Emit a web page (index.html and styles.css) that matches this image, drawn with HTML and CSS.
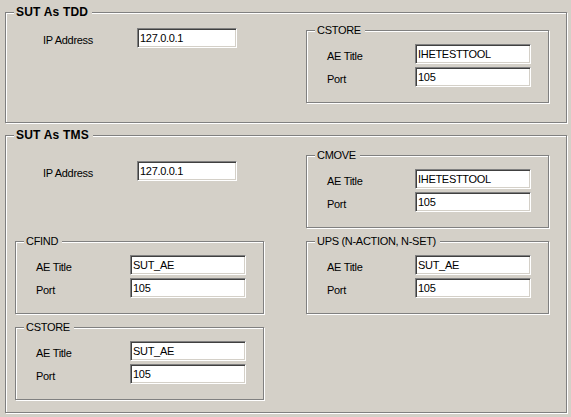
FILE: index.html
```html
<!DOCTYPE html>
<html>
<head>
<meta charset="utf-8">
<title>SUT Settings</title>
<link rel="stylesheet" href="styles.css">
</head>
<body>
<div class="dialog">
  <section class="group main tdd">
    <div class="legend legend-bold">SUT As TDD</div>
    <div class="cols">
      <div class="col col-left">
        <div class="ip-row ip-tdd"><label class="ip-label">IP Address</label><input class="box ip-box" type="text" value="127.0.0.1" readonly></div>
      </div>
      <div class="col col-right">
        <section class="group sub sub-tdd">
          <div class="legend">CSTORE</div>
          <div class="field"><label>AE Title</label><input class="box" type="text" value="IHETESTTOOL" readonly></div>
          <div class="field"><label>Port</label><input class="box" type="text" value="105" readonly></div>
        </section>
      </div>
    </div>
  </section>

  <section class="group main tms">
    <div class="legend legend-bold">SUT As TMS</div>
    <div class="cols">
      <div class="col col-left">
        <div class="ip-row ip-tms"><label class="ip-label">IP Address</label><input class="box ip-box" type="text" value="127.0.0.1" readonly></div>
        <section class="group sub sub-cfind">
          <div class="legend">CFIND</div>
          <div class="field"><label>AE Title</label><input class="box" type="text" value="SUT_AE" readonly></div>
          <div class="field"><label>Port</label><input class="box" type="text" value="105" readonly></div>
        </section>
        <section class="group sub sub-next">
          <div class="legend">CSTORE</div>
          <div class="field"><label>AE Title</label><input class="box" type="text" value="SUT_AE" readonly></div>
          <div class="field"><label>Port</label><input class="box" type="text" value="105" readonly></div>
        </section>
      </div>
      <div class="col col-right">
        <section class="group sub sub-first">
          <div class="legend">CMOVE</div>
          <div class="field"><label>AE Title</label><input class="box" type="text" value="IHETESTTOOL" readonly></div>
          <div class="field"><label>Port</label><input class="box" type="text" value="105" readonly></div>
        </section>
        <section class="group sub sub-next">
          <div class="legend">UPS (N-ACTION, N-SET)</div>
          <div class="field"><label>AE Title</label><input class="box" type="text" value="SUT_AE" readonly></div>
          <div class="field"><label>Port</label><input class="box" type="text" value="105" readonly></div>
        </section>
      </div>
    </div>
  </section>
</div>
</body>
</html>
```
FILE: styles.css
```css
* { box-sizing: border-box; }

html, body {
  margin: 0;
  background: #d4d0c8;
}

body {
  width: 571px;
  height: 417px;
  overflow: hidden;
  font-family: "Liberation Sans", Arial, sans-serif;
  font-size: 11px;
  letter-spacing: -0.3px;
  color: #000;
}

.dialog {
  padding: 12px 0 0 5px;
}

/* etched group box */
.group {
  border: 1px solid #808080;
  box-shadow: inset 1px 1px 0 #fff, 1px 1px 0 #fff;
}

.main { width: 562px; }
.tdd { padding-bottom: 19px; }
.tms { margin-top: 12px; padding-bottom: 12px; }

.legend {
  margin: -7px 0 0 8px;
  padding: 0 4px 0 2px;
  width: fit-content;
  height: 13px;
  line-height: 13px;
  background: #d4d0c8;
  white-space: nowrap;
}

.legend-bold {
  font-size: 12px;
  font-weight: bold;
  letter-spacing: 0.2px;
}

.cols {
  display: flex;
  justify-content: space-between;
  align-items: flex-start;
  padding: 0 17px 0 9px;
}

.col-left { width: 249px; }
.col-right { width: 243px; }

/* IP address row */
.ip-row {
  display: flex;
  height: 20px;
  padding-left: 28px;
}
.ip-tdd { margin-top: 9px; }
.ip-tms { margin-top: 19px; }

.ip-label {
  width: 94px;
  padding-top: 6px;
  line-height: 13px;
}

/* sub group boxes */
.sub { padding-bottom: 15px; }
.sub-tdd { margin-top: 11px; }
.sub-first { margin-top: 13px; }
.sub-cfind { margin-top: 60px; }
.sub-next { margin-top: 13px; }

.field {
  display: flex;
  height: 20px;
}
.legend + .field { margin-top: 7px; }
.field + .field { margin-top: 3px; }

.field label {
  padding: 6px 0 0 20px;
  line-height: 13px;
}

/* sunken edit box */
.box {
  display: block;
  width: 116px;
  height: 20px;
  margin: 0 17px 0 auto;
  padding: 0 0 0 2px;
  border: 1px solid;
  border-color: #808080 #fff #fff #808080;
  box-shadow: inset 1px 1px 0 #404040, inset -1px -1px 0 #d4d0c8;
  background: #fff;
  color: #000;
  font-family: inherit;
  font-size: 11px;
  letter-spacing: -0.3px;
  outline: none;
  border-radius: 0;
}

.ip-box {
  width: 100px;
  margin: 0;
}
```
